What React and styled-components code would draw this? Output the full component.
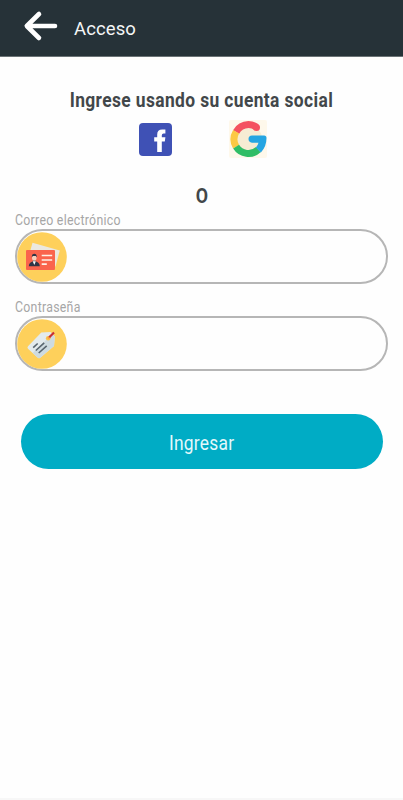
import React from "react";
import styled, { createGlobalStyle } from "styled-components";

const Global = createGlobalStyle`
  *, *::before, *::after { box-sizing: border-box; }
  body { margin: 0; background: #fefefe; font-family: Roboto, "Liberation Sans", sans-serif; }
`;

const Screen = styled.div`
  display: flex;
  flex-direction: column;
  height: 800px;
  background: #fefefe;
  border-bottom: 2px solid #f7f7f7;
  overflow: hidden;
`;

const Header = styled.header`
  display: flex;
  align-items: center;
  flex: none;
  height: 57px;
  padding-left: 23px;
  background: #263238;
  border-bottom: 1px solid #6b7376;
`;

const BackButton = styled.button`
  display: flex;
  width: 36px;
  height: 32px;
  margin-top: -4px;
  padding: 0;
  border: 0;
  background: none;
`;

const HeaderTitle = styled.h1`
  margin: 2px 0 0 15px;
  font-size: 18.5px;
  line-height: 24px;
  font-weight: 400;
  letter-spacing: 0.1px;
  color: #f4f6f6;
`;

const Content = styled.main`
  display: flex;
  flex-direction: column;
  padding: 30px 15px 0;
`;

const Condensed = styled.span`
  display: inline-block;
  white-space: nowrap;
  letter-spacing: ${(p) => p.$spacing || 0}px;
  transform: scaleX(${(p) => p.$scale});
  transform-origin: ${(p) => p.$origin || "center"};
`;

const Heading = styled.h2`
  display: flex;
  justify-content: center;
  margin: 0;
  font-size: 20px;
  line-height: 26px;
  font-weight: 700;
  color: #42474a;
`;

const SocialRow = styled.div`
  display: flex;
  justify-content: center;
  align-items: center;
  gap: 56px;
  height: 40px;
  margin-top: 6px;
  padding-left: 4px;
`;

const SocialButton = styled.button`
  display: flex;
  padding: 0;
  border: 0;
  background: none;
`;

const Divider = styled(Heading)`
  margin-top: 24px;
`;

const Field = styled.label`
  display: flex;
  flex-direction: column;
  margin-top: ${(p) => p.$top}px;
`;

const FieldLabel = styled.span`
  display: flex;
  font-size: 15px;
  line-height: 18px;
  color: #a6a6a6;
`;

const InputBox = styled.span`
  display: flex;
  align-items: center;
  height: 55px;
  margin-left: -0.5px;
  border: 2px solid #b6b6b6;
  border-radius: 28px;
`;

const Input = styled.input`
  flex: 1;
  min-width: 0;
  height: 40px;
  margin: 0 20px 0 8px;
  border: 0;
  outline: 0;
  background: transparent;
  font: 400 18px Roboto, sans-serif;
`;

const Submit = styled.button`
  height: 55px;
  margin: 43px 5.5px 0;
  padding: 2px 0 0;
  border: 0;
  border-radius: 28px;
  background: #00acc5;
  color: #e3f8fb;
  font: 400 20px Roboto, "Liberation Sans", sans-serif;
`;

const BackArrow = () => (
  <svg width="36" height="32" viewBox="0 0 36 32" fill="none" stroke="#fff" strokeWidth="4.6" strokeLinecap="round" strokeLinejoin="round">
    <path d="M16 4L3.8 16L16 28M4 16H32" />
  </svg>
);

const FacebookLogo = () => (
  <svg width="33" height="33" viewBox="0 0 33 33">
    <rect width="33" height="33" rx="4" fill="#3f51b5" />
    <path d="M18.2 29V18.5H15.2V14.3H18.2V11.5Q18.2 6.4 23.2 6.4H26.4V10.6H24.6Q22.8 10.6 22.8 12.4V14.3H26.4L25.8 18.5H22.8V29Z" fill="#fff" />
  </svg>
);

const GoogleLogo = () => (
  <svg width="40" height="40" viewBox="0 0 40 40">
    <rect x="1" y="1" width="38" height="38" rx="2" fill="#fef8eb" />
    <circle cx="20" cy="20" r="14" fill="#f6ecd3" />
    <g transform="translate(.5 .5)">
      <g fill="none" strokeWidth="7">
        <path d="M7.6 12.4A14.6 14.6 0 0 1 20 5Q24.5 5 28 7.6" stroke="#f4525f" />
        <circle cx="28" cy="8" r="3.5" fill="#f4525f" stroke="none" />
        <path d="M7.6 27.2A14.6 14.6 0 0 1 7.6 12.3" stroke="#fcc944" />
        <path d="M29.8 30.2A14.6 14.6 0 0 1 7.6 27.2" stroke="#30bd66" />
      </g>
      <path d="M23.5 16H35.6Q38 16 38 18.6Q38 27.3 32.4 33L27.4 27.9Q29.2 26.3 30 23.2H23.5Q20 23 20 19.6Q20 16.2 23.5 16Z" fill="#25a5e2" />
    </g>
  </svg>
);

const CardIcon = () => (
  <svg width="50" height="50" viewBox="0 0 50 50">
    <circle cx="25" cy="25" r="24.8" fill="#fed05b" />
    <path d="M15.5 10.8L42.8 18.4L38.5 34.5L11 27Z" fill="#ebe8df" />
    <rect x="9" y="18" width="29" height="20" rx="1" fill="#fa644d" />
    <path d="M11.8 34.3Q12 30.5 15.5 29.5L17.3 27.5L19.1 29.5Q22.6 30.5 22.8 34.3Z" fill="#303546" />
    <path d="M15.7 29.2L17.3 33L18.9 29.2Z" fill="#fff" />
    <ellipse cx="17.3" cy="25.8" rx="2.3" ry="3" fill="#f6d0bd" />
    <path d="M14.8 25.5Q14.5 21.8 17.3 21.8T19.8 25.5L18.8 24H15.8Z" fill="#303546" />
    <path d="M24.7 23.5H35.2M24.7 28H35.2M24.7 32.2H29.8" stroke="#fff1e8" strokeWidth="1.7" />
  </svg>
);

const TagIcon = () => (
  <svg width="50" height="50" viewBox="0 0 50 50">
    <circle cx="25" cy="25" r="24.8" fill="#fed05b" />
    <path d="M11 27.3L24.3 13.5L33.5 13L37.8 17.5L37 27L23.8 38.3Q22 40 20.3 38.3L11 29.8Q9.9 28.5 11 27.3Z" fill="#e3ebed" />
    <path d="M15.7 34L35.3 15L37.8 17.5L37 27L23.8 38.3Q22 40 20.3 38.3Z" fill="#cedbe0" />
    <circle cx="31.2" cy="19.3" r="2.3" fill="#fcc14a" />
    <path d="M31 19.5L33.2 17.2" stroke="#f49b45" strokeWidth="2" />
    <path d="M32.3 18.3L37 13.5" stroke="#c92f35" strokeWidth="2.2" />
    <path d="M16.2 28.7L20.7 24.5M18.8 31.5L27.2 23.8M21.7 34L29.7 26.8" stroke="#59666f" strokeWidth="1.6" />
  </svg>
);

export default function App() {
  return (
    <Screen>
      <Global />
      <Header>
        <BackButton aria-label="Volver"><BackArrow /></BackButton>
        <HeaderTitle>Acceso</HeaderTitle>
      </Header>
      <Content>
        <Heading><Condensed $scale={0.87} $spacing={0.44}>Ingrese usando su cuenta social</Condensed></Heading>
        <SocialRow>
          <SocialButton aria-label="Facebook"><FacebookLogo /></SocialButton>
          <SocialButton aria-label="Google"><GoogleLogo /></SocialButton>
        </SocialRow>
        <Divider as="div"><Condensed $scale={0.89}>O</Condensed></Divider>
        <Field $top={2}>
          <FieldLabel><Condensed $scale={0.82} $spacing={0.35} $origin="left">Correo electrónico</Condensed></FieldLabel>
          <InputBox><CardIcon /><Input type="email" /></InputBox>
        </Field>
        <Field $top={14}>
          <FieldLabel><Condensed $scale={0.82} $spacing={0.35} $origin="left">Contraseña</Condensed></FieldLabel>
          <InputBox><TagIcon /><Input type="password" /></InputBox>
        </Field>
        <Submit><Condensed $scale={0.87} $spacing={0.3}>Ingresar</Condensed></Submit>
      </Content>
    </Screen>
  );
}
